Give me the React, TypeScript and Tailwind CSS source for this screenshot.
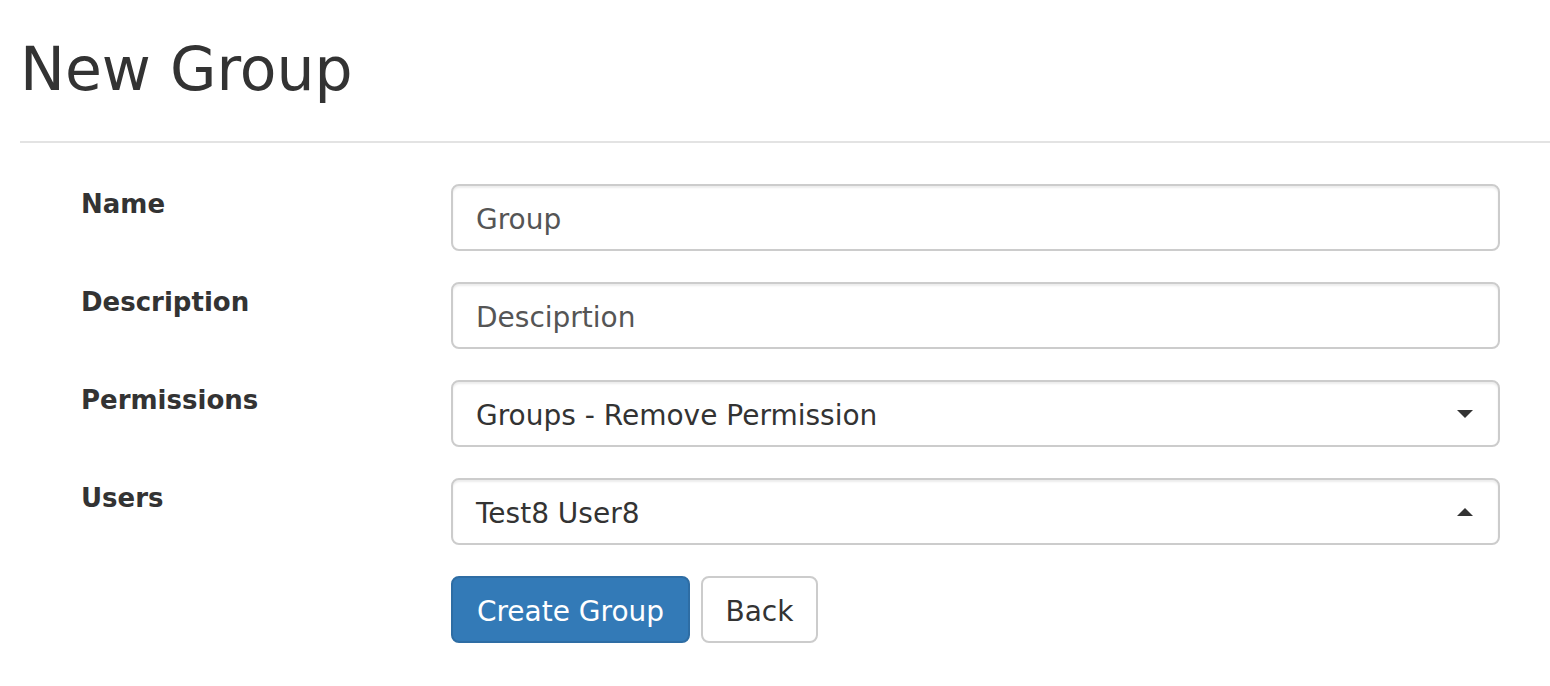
import React from "react";

function Field({ label, children }: { label: string; children: React.ReactNode }) {
  return (
    <div className="flex">
      <div className="w-[431px] shrink-0 pl-[61px]">
        <label className="block text-[26px] font-bold leading-[40px] text-[#333]">{label}</label>
      </div>
      {children}
    </div>
  );
}

function Box({ text, arrow, color = "#555" }: { text: string; arrow?: "up" | "down"; color?: string }) {
  return (
    <div
      className="flex h-[67px] w-[1049px] items-center justify-between rounded-[8px] border-2 border-[#ccc] bg-white pl-[23px] pr-[25px] text-[28px] leading-[40px] shadow-[inset_0_2px_2px_rgba(0,0,0,0.075)]"
      style={{ color }}
    >
      <span className="pt-[5px]">{text}</span>
      {arrow === "down" && (
        <svg width="16" height="8" viewBox="0 0 16 8">
          <path d="M0 0 L16 0 L8 8 Z" fill="#333" />
        </svg>
      )}
      {arrow === "up" && (
        <svg width="16" height="8" viewBox="0 0 16 8">
          <path d="M0 8 L16 8 L8 0 Z" fill="#333" />
        </svg>
      )}
    </div>
  );
}

export default function App() {
  return (
    <div
      className="min-h-[686px] bg-white pl-[20px] text-[#333]"
      style={{ fontFamily: '"DejaVu Sans", Verdana, sans-serif' }}
    >
      <h1 className="pt-[36px] text-[60px] font-normal leading-[66px] text-[#333]">New Group</h1>
      <div className="mt-[39px] h-[2px] bg-[#e3e3e3]" />
      <div className="mt-[41px] flex flex-col gap-[31px]">
        <Field label="Name">
          <Box text="Group" />
        </Field>
        <Field label="Description">
          <Box text="Desciprtion" />
        </Field>
        <Field label="Permissions">
          <Box text="Groups - Remove Permission" arrow="down" color="#333" />
        </Field>
        <Field label="Users">
          <Box text="Test8 User8" arrow="up" color="#333" />
        </Field>
        <div className="flex">
          <div className="w-[431px] shrink-0" />
          <div className="flex gap-[11px]">
            <button className="h-[67px] w-[239px] rounded-[8px] border-2 border-[#2e6da4] bg-[#337ab7] pt-[4px] text-[28px] leading-[40px] text-white">
              Create Group
            </button>
            <button className="h-[67px] w-[117px] rounded-[8px] border-2 border-[#ccc] bg-white pt-[4px] text-[28px] leading-[40px] text-[#333]">
              Back
            </button>
          </div>
        </div>
      </div>
    </div>
  );
}
